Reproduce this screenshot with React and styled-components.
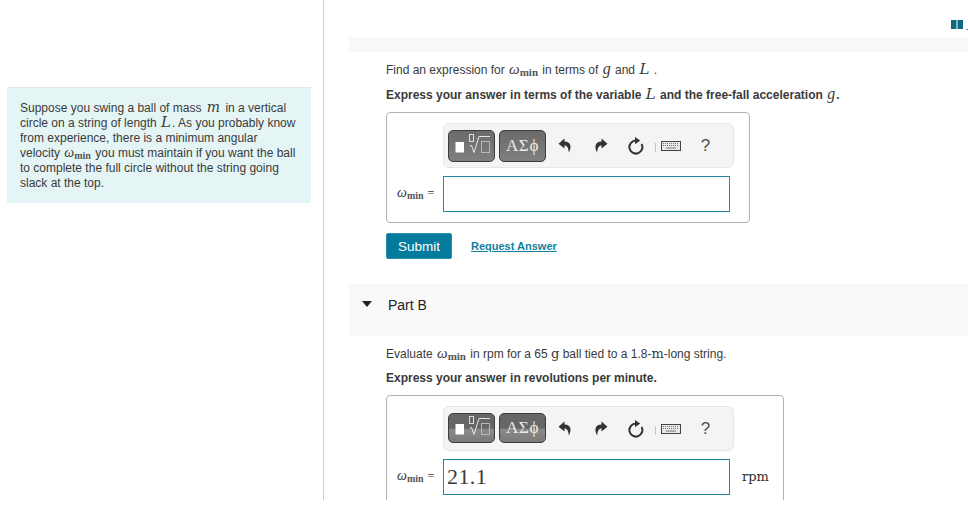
import React from "react";
import styled, { createGlobalStyle } from "styled-components";

const Global = createGlobalStyle`
  html, body { margin: 0; padding: 0; background: #fff; }
  body { font-family: "Liberation Sans", Arial, sans-serif; font-size: 12px; color: #3a3a3a; }
`;

const Shell = styled.div`
  display: flex;
  height: 500px;
  overflow: hidden;
`;

const Aside = styled.aside`
  width: 324px;
  flex: none;
  box-sizing: border-box;
  padding: 87px 12px 0 7px;
  border-right: 1px solid #cfcfcf;
`;

const Intro = styled.div`
  background: #e5f5f6;
  border-top: 1px solid #e2e6e8;
  padding: 13px 12px 13px 13px;
  font-size: 12px;
  line-height: 15px;
  height: 116px;
  box-sizing: border-box;
`;

const Main = styled.main`
  flex: 1;
  min-width: 0;
  position: relative;
  padding: 37px 0 0 25px;
`;

const BookMark = styled.svg`
  position: absolute;
  top: 19px;
  right: 0;
`;

const Band = styled.div`
  height: 15px;
  background: #f9f9f9;
`;

const Part = styled.section`
  padding: 0 0 0 37px;
`;

const Question = styled.p`
  margin: 10px 0 0;
  font-size: 12px;
  line-height: 16px;
  height: 16px;
  white-space: nowrap;
`;

const Instruction = styled(Question)`
  font-weight: bold;
  margin-top: ${(p) => p.$top || 8}px;
`;

const Var = styled.i`
  font-family: ${(p) => (p.$wide ? '"DejaVu Serif"' : '"Liberation Serif"')}, serif;
  font-size: ${(p) => p.$size || 16}px;
  line-height: 0;
  font-weight: normal;
  margin: 0 ${(p) => p.$gap || 1}px;
`;

const Omega = styled.span`
  font-family: "Liberation Serif", serif;
  font-size: ${(p) => (p.$small ? 14 : 15)}px;
  line-height: 0;
  white-space: nowrap;
  margin: 0 1px;

  i { font-style: italic; }
  sub {
    font-size: ${(p) => (p.$small ? 10 : 11)}px;
    font-weight: bold;
    line-height: 0;
    vertical-align: -2px;
    color: #555;
  }
`;

const Unit = styled.b`
  font-family: "DejaVu Serif", serif;
  font-weight: normal;
  font-size: 13px;
  line-height: 0;
`;

const AnswerBox = styled.div`
  margin-top: 9px;
  width: ${(p) => p.$width}px;
  height: 111px;
  box-sizing: border-box;
  border: 1px solid #b3b3b3;
  border-radius: 4px;
  padding: 10px 0 0 56px;
  position: relative;
`;

const Toolbar = styled.div`
  display: flex;
  align-items: center;
  width: 291px;
  height: 45px;
  box-sizing: border-box;
  padding: 0 4px;
  gap: 4px;
  background: #f4f4f4;
  border: 1px solid #e6e6e6;
  border-radius: 6px;
`;

const ToolButton = styled.button`
  width: 47px;
  height: ${(p) => (p.$split ? 30 : 32)}px;
  margin-bottom: ${(p) => (p.$split ? 2 : 0)}px;
  padding: 0;
  flex: none;
  display: flex;
  align-items: center;
  justify-content: center;
  color: #ececec;
  font-family: "Liberation Serif", serif;
  font-size: 17px;
  letter-spacing: 0.7px;
  border: 1px solid #3d3d3d;
  border-radius: 5px;
  background: ${(p) =>
    p.$split
      ? "linear-gradient(#666 0, #666 50%, #8a8a8a 56%, #7a7a7a 100%)"
      : "linear-gradient(#6b6b6b, #7f7f7f)"};
`;

const Slots = styled.div`
  display: flex;
  align-items: center;
  margin-left: -3px;
`;

const Slot = styled.span`
  width: ${(p) => p.$width || 35}px;
  flex: none;
  display: flex;
  justify-content: center;
  align-items: center;
  color: #333;
`;

const Divider = styled.span`
  width: 1px;
  height: 9px;
  margin: 3px 0 0 3px;
  background: #c4c4c4;
  flex: none;
`;

const Help = styled(Slot)`
  font-size: 17px;
  color: #4d4d4d;
  margin-left: 3px;
`;

const AnswerRow = styled.div`
  display: flex;
  align-items: center;
  margin-top: 8px;
`;

const Equals = styled.label`
  position: absolute;
  left: 9px;
  margin-top: -2px;
  font-family: "Liberation Serif", serif;
  font-size: 12px;
  white-space: nowrap;
`;

const Field = styled.input`
  width: 287px;
  height: 36px;
  box-sizing: border-box;
  border: 1px solid #2a87a3;
  padding: 0 4px 0 3px;
  margin: 0;
  outline: none;
  background: #fff;
  color: #3a3a3a;
  font-family: "Liberation Serif", serif;
  font-size: 22px;
  letter-spacing: 0.4px;
`;

const UnitLabel = styled.span`
  margin-left: 12px;
  color: #2e2e2e;
`;

const Actions = styled.div`
  display: flex;
  align-items: center;
  gap: 19px;
  margin-top: 10px;
`;

const Submit = styled.button`
  width: 66px;
  height: 26px;
  padding: 0;
  background: #047b9c;
  border: 1px solid #2a8fab;
  border-radius: 2px;
  color: #fff;
  font-family: inherit;
  font-size: 13.5px;
`;

const Reveal = styled.a`
  color: #0f7ea0;
  font-weight: bold;
  font-size: 11px;
  text-decoration: underline;
  margin-bottom: 1px;
`;

const PartHead = styled.div`
  display: flex;
  align-items: flex-start;
  height: 52px;
  box-sizing: border-box;
  margin-top: 25px;
  padding: 13px 0 0 13px;
  background: #f9f9f9;
  color: #222;
  font-size: 14px;
  line-height: 16px;
`;

const Caret = styled.span`
  width: 0;
  height: 0;
  margin: 4px 16px 0 0;
  border-left: 5px solid transparent;
  border-right: 5px solid transparent;
  border-top: 6px solid #222;
`;

const RootIcon = () => (
  <svg width="45" height="30" viewBox="0 0 45 30" fill="none">
    <rect x="6.5" y="11" width="8.5" height="10.5" fill="#fff" />
    <path d="M21 15 L22.5 14.5 L25 21.5 L30 5.5 H41" stroke="#e6e6e6" strokeWidth="1" />
    <rect x="20.5" y="3.5" width="4" height="7" stroke="#dcdcdc" />
    <rect x="32.5" y="10.5" width="8" height="11" stroke="#b8b8b8" />
  </svg>
);

const UndoIcon = ({ flip }) => (
  <svg width="14" height="15" viewBox="0 0 14 15" style={flip ? { transform: "scaleX(-1)" } : undefined}>
    <path d="M6.5 0.5 L0.5 5.8 L6.5 10.5 V7.6 C9 7.6 10.6 10 10.8 14.5 C14 9.4 13 3.6 6.5 3.6 Z" fill="#333" />
  </svg>
);

const RefreshIcon = () => (
  <svg width="16" height="18" viewBox="0 0 16 18" fill="none">
    <path d="M13.6 7 A6.5 6.5 0 1 1 8 3.6" stroke="#333" strokeWidth="2" />
    <path d="M7 0 L12.2 3.6 L7 7.2 Z" fill="#333" />
  </svg>
);

const KeyboardIcon = () => (
  <svg width="20" height="10" viewBox="0 0 20 10">
    <rect x="0.5" y="0.5" width="19" height="9" fill="#e9e9e9" stroke="#444" />
    <path d="M2 2.5 H18 M2 4.5 H18" stroke="#777" strokeDasharray="1 1" />
    <path d="M5 7 H15" stroke="#777" />
  </svg>
);

const Editor = ({ split }) => (
  <Toolbar>
    <ToolButton $split={split} aria-label="Templates"><RootIcon /></ToolButton>
    <ToolButton $split={split}>ΑΣϕ</ToolButton>
    <Slots>
      <Slot><UndoIcon /></Slot>
      <Slot $width={38}><UndoIcon flip /></Slot>
      <Slot $width={32}><RefreshIcon /></Slot>
      <Divider />
      <Slot $width={29}><KeyboardIcon /></Slot>
      <Help>?</Help>
    </Slots>
  </Toolbar>
);

const OmegaMin = ({ small }) => (
  <Omega $small={small}><i>ω</i><sub>min</sub></Omega>
);

export default function App() {
  return (
    <>
      <Global />
      <Shell>
        <Aside>
          <Intro>
            Suppose you swing a ball of mass <Var $wide $size={14} $gap={2}>m</Var> in a vertical circle on a string of
            length <Var $wide $size={15}>L</Var>. As you probably know from experience, there is a minimum angular
            velocity <OmegaMin small /> you must maintain if you want the ball to complete the full circle
            without the string going slack at the top.
          </Intro>
        </Aside>
        <Main>
          <BookMark width="17" height="12" viewBox="0 0 17 12">
            <path d="M0 1 H5.5 V10 H0 Z M6.5 1 H12 V10 H6.5 Z" fill="#0b6a80" />
            <rect x="15.5" y="10" width="1.5" height="1" fill="#0b6a80" />
          </BookMark>
          <Band />
          <Part>
            <Question>
              Find an expression for <OmegaMin /> in terms of <Var>g</Var> and <Var $wide $size={15}>L</Var> .
            </Question>
            <Instruction $top={9}>
              Express your answer in terms of the variable <Var $wide $size={15}>L</Var> and the free-fall
              acceleration <Var>g</Var>.
            </Instruction>
            <AnswerBox $width={364}>
              <Editor />
              <AnswerRow>
                <Equals><OmegaMin small /> =</Equals>
                <Field readOnly value="" />
              </AnswerRow>
            </AnswerBox>
            <Actions>
              <Submit>Submit</Submit>
              <Reveal>Request Answer</Reveal>
            </Actions>
          </Part>
          <PartHead>
            <Caret />
            Part B
          </PartHead>
          <Part>
            <Question>
              Evaluate <OmegaMin /> in rpm for a 65 <Unit>g</Unit> ball tied to a 1.8-<Unit>m</Unit>-long string.
            </Question>
            <Instruction>Express your answer in revolutions per minute.</Instruction>
            <AnswerBox $width={398}>
              <Editor split />
              <AnswerRow>
                <Equals><OmegaMin small /> =</Equals>
                <Field readOnly value="21.1" />
                <UnitLabel><Unit>rpm</Unit></UnitLabel>
              </AnswerRow>
            </AnswerBox>
          </Part>
        </Main>
      </Shell>
    </>
  );
}
